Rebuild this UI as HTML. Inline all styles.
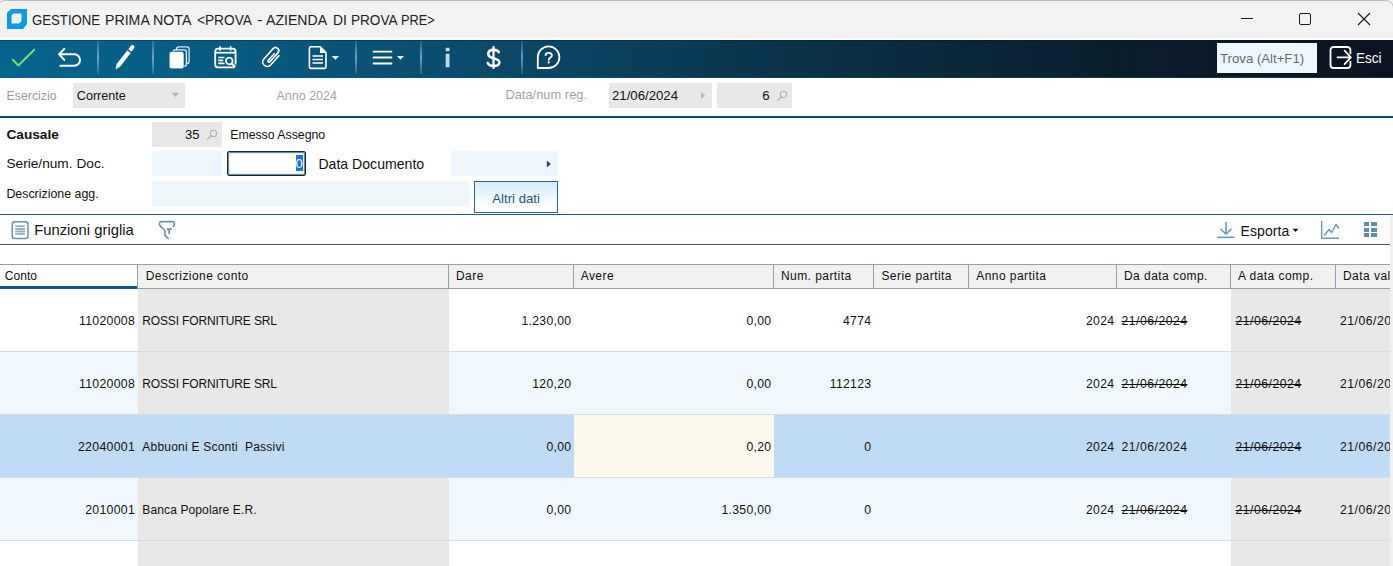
<!DOCTYPE html>
<html><head><meta charset="utf-8"><style>
html,body{margin:0;padding:0;width:1393px;height:566px;overflow:hidden;background:#fff;}
body{position:relative;font-family:"Liberation Sans",sans-serif;}
.t{position:absolute;white-space:nowrap;}
.r{position:absolute;display:block;}
.clip{position:absolute;overflow:hidden;}
</style></head><body>
<div class="r" style="left:0px;top:0px;width:1393px;height:38px;background:#f2f2f2;"></div>
<div class="r" style="left:-3px;top:0;width:1395px;height:60px;border:1px solid #bdbdbd;border-radius:8px;background:#f2f2f2"></div>
<div class="r" style="left:0px;top:38px;width:1393px;height:2px;background:#ffffff;"></div>
<svg class="r" style="left:7px;top:9px" width="21" height="20" viewBox="0 0 21 20">
<path d="M4 0H20V15L16 20H0V4Z" fill="#0a9be0"/>
<path d="M6.5 4.5H14.5V12L12 14.5H4.5V6.5Z" fill="#f2f2f2"/>
</svg>
<div class="t" style="left:32.42px;top:12.20px;font-size:15px;line-height:15px;color:#222;font-weight:normal;transform:scaleX(0.8789);transform-origin:0 0;">GESTIONE</div>
<div class="t" style="left:104.76px;top:12.20px;font-size:15px;line-height:15px;color:#222;font-weight:normal;transform:scaleX(0.9435);transform-origin:0 0;">PRIMA</div>
<div class="t" style="left:153.45px;top:12.20px;font-size:15px;line-height:15px;color:#222;font-weight:normal;transform:scaleX(0.9462);transform-origin:0 0;">NOTA</div>
<div class="t" style="left:197.19px;top:12.20px;font-size:15px;line-height:15px;color:#222;font-weight:normal;transform:scaleX(0.9119);transform-origin:0 0;">&lt;PROVA</div>
<div class="t" style="left:256.77px;top:12.20px;font-size:15px;line-height:15px;color:#222;font-weight:normal;transform:scaleX(1.1250);transform-origin:0 0;">-</div>
<div class="t" style="left:265.96px;top:12.20px;font-size:15px;line-height:15px;color:#222;font-weight:normal;transform:scaleX(0.9400);transform-origin:0 0;">AZIENDA</div>
<div class="t" style="left:333.08px;top:12.20px;font-size:15px;line-height:15px;color:#222;font-weight:normal;transform:scaleX(0.9231);transform-origin:0 0;">DI</div>
<div class="t" style="left:350.50px;top:12.20px;font-size:15px;line-height:15px;color:#222;font-weight:normal;transform:scaleX(0.9040);transform-origin:0 0;">PROVA</div>
<div class="t" style="left:401.05px;top:12.20px;font-size:15px;line-height:15px;color:#222;font-weight:normal;transform:scaleX(0.8526);transform-origin:0 0;">PRE&gt;</div>
<div class="r" style="left:1241px;top:18px;width:12px;height:1px;background:#1b1b1b;"></div>
<div class="r" style="left:1299px;top:13px;width:10px;height:10px;border:1px solid #1b1b1b;border-radius:2px"></div>
<svg class="r" style="left:1357px;top:12px" width="14" height="14" viewBox="0 0 14 14">
<path d="M1 1L13 13M13 1L1 13" stroke="#1b1b1b" stroke-width="1.1"/></svg>
<div class="r" style="left:0px;top:40px;width:1393px;height:38px;background:linear-gradient(90deg,#06648c 0%,#075c84 14%,#095073 29%,#0b4463 40%,#0a3a55 50%,#0a3045 60%,#0a283a 68%,#0a2233 76%,#071e2a 80%,#0a1b2d 84%,#0b1828 90%,#0d1423 95%,#0d1322 100%);"></div>
<div class="r" style="left:96.5px;top:41px;width:2.0px;height:33px;background:linear-gradient(180deg,rgba(140,185,215,0.2),rgba(175,212,235,0.6) 50%,rgba(140,185,215,0.2));"></div>
<div class="r" style="left:151.5px;top:41px;width:2.0px;height:33px;background:linear-gradient(180deg,rgba(140,185,215,0.2),rgba(175,212,235,0.6) 50%,rgba(140,185,215,0.2));"></div>
<div class="r" style="left:354.5px;top:41px;width:2.0px;height:33px;background:linear-gradient(180deg,rgba(140,185,215,0.2),rgba(175,212,235,0.6) 50%,rgba(140,185,215,0.2));"></div>
<div class="r" style="left:419.5px;top:41px;width:2.0px;height:33px;background:linear-gradient(180deg,rgba(140,185,215,0.2),rgba(175,212,235,0.6) 50%,rgba(140,185,215,0.2));"></div>
<div class="r" style="left:520.5px;top:41px;width:2.0px;height:33px;background:linear-gradient(180deg,rgba(140,185,215,0.2),rgba(175,212,235,0.6) 50%,rgba(140,185,215,0.2));"></div>

<svg class="r" style="left:0;top:40px" width="580" height="38" viewBox="0 40 580 38">
 <g fill="none" stroke-linecap="round" stroke-linejoin="round">
  <path d="M12.8 59.8L18.4 65.4L34.2 49.8" stroke="#78dc6a" stroke-width="2.1"/>
  <path d="M64.4 48.8L59 54.3L64.3 59.9M59 54.3H74.3A5.7 5.7 0 0 1 74.3 65.7H60.3" stroke="#fff" stroke-width="2"/>
 </g>
 <path d="M116 68.8L116.9 64.1L127.3 50.7L130.4 53.1L120 66.6Z" fill="#fff" stroke="#fff" stroke-width="0.5" stroke-linejoin="round"/>
 <path d="M129.9 50.5L132.5 47.1" stroke="#fff" stroke-width="4"/>
 <circle cx="132.5" cy="47.1" r="2" fill="#fff"/>
 <!-- copy -->
 <rect x="176.6" y="46.9" width="12.5" height="16.6" rx="2.2" fill="#0a5884" stroke="#cfeafa" stroke-width="1.3"/>
 <rect x="173.2" y="49.9" width="13.2" height="16.2" rx="2.2" fill="#0a5884" stroke="#e4f5ff" stroke-width="1.3"/>
 <rect x="169.2" y="51.6" width="14.8" height="17.2" rx="2.4" fill="#fff" stroke="#0a5884" stroke-width="0.6"/>
 <!-- calendar -->
 <g fill="none" stroke="#fff" stroke-width="1.8">
  <rect x="215.2" y="48.6" width="20.4" height="18.8" rx="3"/>
  <path d="M215.2 52.7H235.6"/>
  <path d="M220 46.9V50M230.6 46.9V50" stroke-linecap="round" stroke-width="1.7"/>
  <path d="M218.2 57.5H224.5M218.2 60.4H223.2M218.2 63.3H224.5" stroke-width="1.7"/>
  <circle cx="229.3" cy="61" r="3.3" stroke-width="1.7"/>
  <path d="M231.7 63.5L235.3 66.8" stroke-width="1.8"/>
 </g>
 <path d="M233.3 66.3L236.5 68.8L236.5 63.3Z" fill="#0a5884"/>
 <path d="M231.7 63.5L235.3 66.8" stroke="#fff" stroke-width="1.8"/>
 <!-- paperclip -->
 <g transform="translate(271.4 57.3) rotate(41.8)">
  <path d="M4.5 -6.2V6.2A4.5 4.5 0 0 1 -4.5 6.2V-7.6A3.2 3.2 0 0 1 1.9 -7.6V4.3A1.1 1.1 0 0 1 -0.3 4.3V-4.6" fill="none" stroke="#fff" stroke-width="1.6" stroke-linecap="round"/>
 </g>
 <!-- doc -->
 <path d="M311 46.8H320.3L326 52.5V66.8A1.6 1.6 0 0 1 324.4 68.4H311A1.6 1.6 0 0 1 309.4 66.8V48.4A1.6 1.6 0 0 1 311 46.8Z" fill="none" stroke="#fff" stroke-width="1.6" stroke-linejoin="round"/>
 <path d="M320 46.8V53H326Z" fill="#fff"/>
 <path d="M312.5 56H323M312.5 59.5H323M312.5 63H323" stroke="#fff" stroke-width="1.6"/>
 <path d="M331.8 56H339L335.4 59.8Z" fill="#fff"/>
 <!-- menu -->
 <path d="M373.5 51.6H391.5M373.5 57.5H391.5M373.5 63.5H391.5" stroke="#fff" stroke-width="1.8" stroke-linecap="round"/>
 <path d="M397 56H404L400.5 59.8Z" fill="#fff"/>
 <!-- info -->
 <rect x="445.7" y="47.8" width="3.8" height="3.4" fill="#c9d6e0"/>
 <rect x="445.7" y="53.8" width="3.8" height="13.5" fill="#c9d6e0"/>
 <!-- help -->
 <path d="M537.8 68V57.3A10.8 10.8 0 1 1 548.6 68Z" fill="none" stroke="#fff" stroke-width="1.8" stroke-linejoin="round"/>
</svg>
<svg class="r" style="left:470px;top:40px" width="100" height="38" viewBox="470 40 100 38">
<path d="M493.5 46.2V68.8" stroke="#fff" stroke-width="2.2"/>
<path d="M498.8 52.2C498 50.6 496.2 49.9 493.6 49.9C490.2 49.9 488.3 51.6 488.3 54C488.3 59.8 499.4 57.2 499.4 62.2C499.4 64.6 497.2 66 493.8 66C490.8 66 488.7 65.1 487.8 63" fill="none" stroke="#fff" stroke-width="2.6" stroke-linecap="round"/>
<path d="M545.6 55.2C545.6 53.6 546.9 52.8 548.7 52.8C550.6 52.8 551.9 53.8 551.9 55.4C551.9 57.5 548.8 57.6 548.8 59.8" fill="none" stroke="#fff" stroke-width="1.8" stroke-linecap="round"/>
<circle cx="548.7" cy="62.4" r="1.05" fill="#fff"/>
</svg>
<div class="r" style="left:1217px;top:43px;width:100px;height:30px;background:#eef7fd;"></div>
<div class="t" style="left:1220.00px;top:51.73px;font-size:13.2px;line-height:13.2px;color:#666a70;font-weight:normal;">Trova (Alt+F1)</div>
<svg class="r" style="left:1328px;top:45px" width="26" height="26" viewBox="0 0 26 26">
<path d="M22.4 9.2V5A3 3 0 0 0 19.4 2H5.5A3 3 0 0 0 2.5 5V20A3 3 0 0 0 5.5 23H19.4A3 3 0 0 0 22.4 20V16" fill="none" stroke="#fff" stroke-width="1.8"/>
<path d="M9.6 12.4H22.4M16.6 5.6L22.8 12.4L16.6 19.2" fill="none" stroke="#fff" stroke-width="1.8" stroke-linecap="round" stroke-linejoin="round"/>
</svg>
<div class="t" style="left:1356.20px;top:49.78px;font-size:15.5px;line-height:15.5px;color:#fff;font-weight:normal;transform:scaleX(0.87);transform-origin:0 0;">Esci</div>
<div class="r" style="left:0px;top:77px;width:1393px;height:1px;background:rgba(10,95,120,0.45);"></div>
<div class="r" style="left:0px;top:40px;width:1393px;height:1px;background:rgba(0,20,35,0.3);"></div>
<div class="t" style="left:6.60px;top:89.59px;font-size:12.3px;line-height:12.3px;color:#9b9b9b;font-weight:normal;">Esercizio</div>
<div class="r" style="left:73px;top:83px;width:112px;height:25px;background:#e8e8e8;"></div>
<div class="t" style="left:76.80px;top:90.03px;font-size:12.6px;line-height:12.6px;color:#111;font-weight:normal;">Corrente</div>
<svg class="r" style="left:171px;top:92px" width="9" height="6" viewBox="0 0 9 6"><path d="M0.5 0.8H8.5L4.5 5Z" fill="#b5b5b5"/></svg>
<div class="t" style="left:276.50px;top:89.62px;font-size:12.5px;line-height:12.5px;color:#a3a3a3;font-weight:normal;">Anno 2024</div>
<div class="t" style="left:505.40px;top:89.28px;font-size:12.9px;line-height:12.9px;color:#a3a3a3;font-weight:normal;">Data/num reg.</div>
<div class="r" style="left:609px;top:83px;width:103px;height:25px;background:#e8e8e8;"></div>
<div class="t" style="left:612.00px;top:89.03px;font-size:13.2px;line-height:13.2px;color:#111;font-weight:normal;">21/06/2024</div>
<svg class="r" style="left:700px;top:91px" width="6" height="9" viewBox="0 0 6 9"><path d="M1 0.5V8.5L5 4.5Z" fill="#b8b8b8"/></svg>
<div class="r" style="left:717px;top:83px;width:75px;height:25px;background:#e8e8e8;"></div>
<div class="t" style="right:623.50px;top:89.03px;font-size:13.2px;line-height:13.2px;color:#111;font-weight:normal;">6</div>
<svg class="r" style="left:776px;top:89px" width="12" height="12" viewBox="0 0 12 12"><circle cx="7.5" cy="5.4" r="3.1" fill="none" stroke="#b0b0b0" stroke-width="1.1"/><path d="M5.3 7.6L1.6 11.4" stroke="#b0b0b0" stroke-width="1.3" stroke-linecap="round"/></svg>
<div class="r" style="left:0px;top:116px;width:1393px;height:2px;background:#0b5073;"></div>
<div class="t" style="left:6.40px;top:128.30px;font-size:13.7px;line-height:13.7px;color:#111;font-weight:bold;">Causale</div>
<div class="r" style="left:152px;top:122px;width:70px;height:25px;background:#e8e8e8;"></div>
<div class="t" style="right:1193.50px;top:127.80px;font-size:13.0px;line-height:13.0px;color:#111;font-weight:normal;">35</div>
<svg class="r" style="left:206px;top:128px" width="12" height="12" viewBox="0 0 12 12"><circle cx="7.5" cy="5.4" r="3.1" fill="none" stroke="#b0b0b0" stroke-width="1.1"/><path d="M5.3 7.6L1.6 11.4" stroke="#b0b0b0" stroke-width="1.3" stroke-linecap="round"/></svg>
<div class="t" style="left:230.20px;top:129.39px;font-size:12.3px;line-height:12.3px;color:#111;font-weight:normal;">Emesso Assegno</div>
<div class="t" style="left:6.40px;top:157.40px;font-size:13.7px;line-height:13.7px;color:#111;font-weight:normal;">Serie/num. Doc.</div>
<div class="r" style="left:152px;top:151px;width:70px;height:25px;background:#eff7fd;"></div>
<div class="r" style="left:227px;top:151px;width:77px;height:23px;border:1px solid #142a38;border-radius:2px;background:#fff;box-shadow:inset 0 0 0 1px rgba(20,45,60,0.55), inset 0 0 0 2px rgba(200,230,250,0.5)"></div>
<div class="r" style="left:296px;top:155px;width:7px;height:16px;background:#1a73d6;"></div>
<div class="t" style="right:1090.20px;top:156.50px;font-size:13.0px;line-height:13.0px;color:#fff;font-weight:normal;">0</div>
<div class="t" style="left:318.40px;top:156.86px;font-size:14.1px;line-height:14.1px;color:#111;font-weight:normal;">Data Documento</div>
<div class="r" style="left:451px;top:151px;width:107px;height:25px;background:#eff7fd;"></div>
<svg class="r" style="left:546px;top:160px" width="6" height="8" viewBox="0 0 6 8"><path d="M0.8 0.5V7.5L5 4Z" fill="#3a4560"/></svg>
<div class="t" style="left:6.40px;top:188.00px;font-size:12.4px;line-height:12.4px;color:#111;font-weight:normal;">Descrizione agg.</div>
<div class="r" style="left:152px;top:181px;width:317px;height:25px;background:#eff7fd;"></div>
<div class="r" style="left:474px;top:181px;width:82px;height:30px;border:1px solid #2b6685;background:linear-gradient(180deg,#d4ecfa 0%,#f4fbff 60%,#ffffff 100%)"></div>
<div class="t" style="left:492.30px;top:191.53px;font-size:13.2px;line-height:13.2px;color:#285677;font-weight:normal;">Altri dati</div>
<div class="r" style="left:0px;top:214px;width:1393px;height:1px;background:#2f5668;"></div>
<svg class="r" style="left:10px;top:220px" width="20" height="20" viewBox="0 0 20 20">
<rect x="2.2" y="1.7" width="15.8" height="16.8" rx="2.5" fill="#fff" stroke="#6a93ac" stroke-width="1.5"/>
<path d="M5 6.2H14.8M5 8.9H14.8M5 11.5H14.8M5 14.1H14.8" stroke="#8d9ba6" stroke-width="1.5"/>
<path d="M5 6.2H6.6M5 8.9H6.6M5 11.5H6.6M5 14.1H6.6" stroke="#c5ccd2" stroke-width="1.5"/>
<path d="M7.5 8.9H14.8M7.5 11.5H14.8" stroke="#79b4d8" stroke-width="1.5"/>
</svg>
<div class="t" style="left:34.20px;top:222.67px;font-size:14.8px;line-height:14.8px;color:#111;font-weight:normal;">Funzioni griglia</div>
<svg class="r" style="left:157px;top:219px" width="20" height="21" viewBox="0 0 20 21">
<path d="M16.3 7.2L17.3 6.1V4A1.6 1.6 0 0 0 15.7 2.6H4.1A1.6 1.6 0 0 0 2.5 4V6.1L7.9 11.8V16.3L11.2 19.4" fill="none" stroke="#6a93ac" stroke-width="1.6" stroke-linecap="round" stroke-linejoin="round"/>
<path d="M9.6 10.1H14.8M12.2 10.1V15" stroke="#6a93ac" stroke-width="1.7"/>
</svg>
<svg class="r" style="left:1216px;top:221px" width="20" height="18" viewBox="0 0 20 18">
<path d="M10 1.5V13M5 8.2L10 13.2L15 8.2" fill="none" stroke="#6a9ab8" stroke-width="1.6" stroke-linecap="round"/>
<path d="M1.3 16.3H18.7" stroke="#6a9ab8" stroke-width="1.6"/>
</svg>
<div class="t" style="left:1240.50px;top:223.75px;font-size:14.0px;line-height:14.0px;color:#111;font-weight:normal;letter-spacing:0.1px;">Esporta</div>
<svg class="r" style="left:1292px;top:228px" width="7" height="5" viewBox="0 0 7 5"><path d="M0.5 0.8H6.5L3.5 4Z" fill="#111"/></svg>
<svg class="r" style="left:1320px;top:220px" width="20" height="20" viewBox="0 0 20 20">
<path d="M1.7 1V18.2H19" fill="none" stroke="#6a9ab8" stroke-width="1.4"/>
<path d="M4.5 15L9 9.5L11.7 12.5L16 4.5L18.5 8" fill="none" stroke="#6a9ab8" stroke-width="1.5" stroke-linejoin="round" stroke-linecap="round"/>
</svg>
<div class="r" style="left:1363.5px;top:222px;width:5.2px;height:4.2px;background:#5f8ea8"></div>
<div class="r" style="left:1370.5px;top:222px;width:6.8px;height:4.2px;background:#5f8ea8"></div>
<div class="r" style="left:1363.5px;top:227.5px;width:5.2px;height:4.2px;background:#5f8ea8"></div>
<div class="r" style="left:1370.5px;top:227.5px;width:6.8px;height:4.2px;background:#5f8ea8"></div>
<div class="r" style="left:1363.5px;top:233px;width:5.2px;height:4.2px;background:#5f8ea8"></div>
<div class="r" style="left:1370.5px;top:233px;width:6.8px;height:4.2px;background:#5f8ea8"></div>
<div class="r" style="left:0px;top:244px;width:1390px;height:1px;background:#555;"></div>
<div class="r" style="left:0px;top:264px;width:1390px;height:25px;background:#f0f0f0;"></div>
<div class="r" style="left:0px;top:264px;width:137px;height:25px;background:#ffffff;"></div>
<div class="r" style="left:0px;top:264px;width:1390px;height:1px;background:#8fa1b3;"></div>
<div class="r" style="left:0px;top:288px;width:1390px;height:1px;background:#8fa1b3;"></div>
<div class="r" style="left:0px;top:286px;width:137px;height:3px;background:#14587e;"></div>
<div class="r" style="left:137px;top:265px;width:1px;height:23px;background:#8fa1b3;"></div>
<div class="r" style="left:448px;top:265px;width:1px;height:23px;background:#8fa1b3;"></div>
<div class="r" style="left:573px;top:265px;width:1px;height:23px;background:#8fa1b3;"></div>
<div class="r" style="left:773px;top:265px;width:1px;height:23px;background:#8fa1b3;"></div>
<div class="r" style="left:873px;top:265px;width:1px;height:23px;background:#8fa1b3;"></div>
<div class="r" style="left:968px;top:265px;width:1px;height:23px;background:#8fa1b3;"></div>
<div class="r" style="left:1116px;top:265px;width:1px;height:23px;background:#8fa1b3;"></div>
<div class="r" style="left:1230px;top:265px;width:1px;height:23px;background:#8fa1b3;"></div>
<div class="r" style="left:1335px;top:265px;width:1px;height:23px;background:#8fa1b3;"></div>
<div class="t" style="left:4.80px;top:270.44px;font-size:12.0px;line-height:12.0px;color:#111;font-weight:normal;letter-spacing:0.05px;">Conto</div>
<div class="t" style="left:145.70px;top:270.44px;font-size:12.0px;line-height:12.0px;color:#111;font-weight:normal;letter-spacing:0.45px;">Descrizione conto</div>
<div class="t" style="left:456.00px;top:270.44px;font-size:12.0px;line-height:12.0px;color:#111;font-weight:normal;letter-spacing:0.45px;">Dare</div>
<div class="t" style="left:580.70px;top:270.44px;font-size:12.0px;line-height:12.0px;color:#111;font-weight:normal;letter-spacing:0.45px;">Avere</div>
<div class="t" style="left:780.90px;top:270.44px;font-size:12.0px;line-height:12.0px;color:#111;font-weight:normal;letter-spacing:0.45px;">Num. partita</div>
<div class="t" style="left:881.40px;top:270.44px;font-size:12.0px;line-height:12.0px;color:#111;font-weight:normal;letter-spacing:0.45px;">Serie partita</div>
<div class="t" style="left:976.20px;top:270.44px;font-size:12.0px;line-height:12.0px;color:#111;font-weight:normal;letter-spacing:0.45px;">Anno partita</div>
<div class="t" style="left:1124.00px;top:270.44px;font-size:12.0px;line-height:12.0px;color:#111;font-weight:normal;letter-spacing:0.45px;">Da data comp.</div>
<div class="t" style="left:1238.00px;top:270.44px;font-size:12.0px;line-height:12.0px;color:#111;font-weight:normal;letter-spacing:0.45px;">A data comp.</div>
<div class="t" style="left:1343.00px;top:270.44px;font-size:12.0px;line-height:12.0px;color:#111;font-weight:normal;letter-spacing:0.45px;">Data val</div>
<div class="r" style="left:0px;top:289px;width:1390px;height:62px;background:#ffffff;"></div>
<div class="r" style="left:138px;top:289px;width:311px;height:62px;background:#e8e8e8;"></div>
<div class="r" style="left:1231px;top:289px;width:159px;height:62px;background:#e8e8e8;"></div>
<div class="r" style="left:0px;top:351px;width:1390px;height:1px;background:#d9dde2;"></div>
<div class="t" style="right:1257.90px;top:314.59px;font-size:12.3px;line-height:12.3px;color:#111;font-weight:normal;letter-spacing:0.3px;">11020008</div>
<div class="t" style="left:142.30px;top:314.84px;font-size:12.0px;line-height:12.0px;color:#111;font-weight:normal;letter-spacing:-0.15px;">ROSSI FORNITURE SRL</div>
<div class="t" style="right:821.70px;top:314.67px;font-size:12.2px;line-height:12.2px;color:#111;font-weight:normal;letter-spacing:0.3px;">1.230,00</div>
<div class="t" style="right:621.70px;top:314.67px;font-size:12.2px;line-height:12.2px;color:#111;font-weight:normal;letter-spacing:0.3px;">0,00</div>
<div class="t" style="right:521.70px;top:314.67px;font-size:12.2px;line-height:12.2px;color:#111;font-weight:normal;letter-spacing:0.3px;">4774</div>
<div class="t" style="right:278.70px;top:314.67px;font-size:12.2px;line-height:12.2px;color:#111;font-weight:normal;letter-spacing:0.3px;">2024</div>
<div class="t" style="left:1121.50px;top:314.67px;font-size:12.2px;line-height:12.2px;color:#111;font-weight:normal;letter-spacing:0.5px;text-decoration:line-through;">21/06/2024</div>
<div class="t" style="left:1235.50px;top:314.67px;font-size:12.2px;line-height:12.2px;color:#111;font-weight:normal;letter-spacing:0.5px;text-decoration:line-through;">21/06/2024</div>
<div class="t" style="left:1340.00px;top:314.67px;font-size:12.2px;line-height:12.2px;color:#111;font-weight:normal;letter-spacing:0.5px;">21/06/2024</div>
<div class="r" style="left:0px;top:352px;width:1390px;height:62px;background:#f0f8fe;"></div>
<div class="r" style="left:138px;top:352px;width:311px;height:62px;background:#e8e8e8;"></div>
<div class="r" style="left:1231px;top:352px;width:159px;height:62px;background:#e8e8e8;"></div>
<div class="r" style="left:0px;top:414px;width:1390px;height:1px;background:#d9dde2;"></div>
<div class="t" style="right:1257.90px;top:377.59px;font-size:12.3px;line-height:12.3px;color:#111;font-weight:normal;letter-spacing:0.3px;">11020008</div>
<div class="t" style="left:142.30px;top:377.84px;font-size:12.0px;line-height:12.0px;color:#111;font-weight:normal;letter-spacing:-0.15px;">ROSSI FORNITURE SRL</div>
<div class="t" style="right:821.70px;top:377.67px;font-size:12.2px;line-height:12.2px;color:#111;font-weight:normal;letter-spacing:0.3px;">120,20</div>
<div class="t" style="right:621.70px;top:377.67px;font-size:12.2px;line-height:12.2px;color:#111;font-weight:normal;letter-spacing:0.3px;">0,00</div>
<div class="t" style="right:521.70px;top:377.67px;font-size:12.2px;line-height:12.2px;color:#111;font-weight:normal;letter-spacing:0.3px;">112123</div>
<div class="t" style="right:278.70px;top:377.67px;font-size:12.2px;line-height:12.2px;color:#111;font-weight:normal;letter-spacing:0.3px;">2024</div>
<div class="t" style="left:1121.50px;top:377.67px;font-size:12.2px;line-height:12.2px;color:#111;font-weight:normal;letter-spacing:0.5px;text-decoration:line-through;">21/06/2024</div>
<div class="t" style="left:1235.50px;top:377.67px;font-size:12.2px;line-height:12.2px;color:#111;font-weight:normal;letter-spacing:0.5px;text-decoration:line-through;">21/06/2024</div>
<div class="t" style="left:1340.00px;top:377.67px;font-size:12.2px;line-height:12.2px;color:#111;font-weight:normal;letter-spacing:0.5px;">21/06/2024</div>
<div class="r" style="left:0px;top:415px;width:1390px;height:62px;background:#bfdbf6;"></div>
<div class="r" style="left:574px;top:415px;width:200px;height:62px;background:#fdf8ee;"></div>
<div class="r" style="left:0px;top:477px;width:1390px;height:1px;background:#d9dde2;"></div>
<div class="t" style="right:1257.90px;top:440.59px;font-size:12.3px;line-height:12.3px;color:#111;font-weight:normal;letter-spacing:0.3px;">22040001</div>
<div class="t" style="left:142.30px;top:440.84px;font-size:12.0px;line-height:12.0px;color:#111;font-weight:normal;letter-spacing:0.22px;">Abbuoni E Sconti&nbsp; Passivi</div>
<div class="t" style="right:821.70px;top:440.67px;font-size:12.2px;line-height:12.2px;color:#111;font-weight:normal;letter-spacing:0.3px;">0,00</div>
<div class="t" style="right:621.70px;top:440.67px;font-size:12.2px;line-height:12.2px;color:#111;font-weight:normal;letter-spacing:0.3px;">0,20</div>
<div class="t" style="right:521.70px;top:440.67px;font-size:12.2px;line-height:12.2px;color:#111;font-weight:normal;letter-spacing:0.3px;">0</div>
<div class="t" style="right:278.70px;top:440.67px;font-size:12.2px;line-height:12.2px;color:#111;font-weight:normal;letter-spacing:0.3px;">2024</div>
<div class="t" style="left:1121.50px;top:440.67px;font-size:12.2px;line-height:12.2px;color:#111;font-weight:normal;letter-spacing:0.5px;">21/06/2024</div>
<div class="t" style="left:1235.50px;top:440.67px;font-size:12.2px;line-height:12.2px;color:#111;font-weight:normal;letter-spacing:0.5px;text-decoration:line-through;">21/06/2024</div>
<div class="t" style="left:1340.00px;top:440.67px;font-size:12.2px;line-height:12.2px;color:#111;font-weight:normal;letter-spacing:0.5px;">21/06/2024</div>
<div class="r" style="left:0px;top:478px;width:1390px;height:62px;background:#f0f8fe;"></div>
<div class="r" style="left:138px;top:478px;width:311px;height:62px;background:#e8e8e8;"></div>
<div class="r" style="left:1231px;top:478px;width:159px;height:62px;background:#e8e8e8;"></div>
<div class="r" style="left:0px;top:540px;width:1390px;height:1px;background:#d9dde2;"></div>
<div class="t" style="right:1257.90px;top:503.59px;font-size:12.3px;line-height:12.3px;color:#111;font-weight:normal;letter-spacing:0.3px;">2010001</div>
<div class="t" style="left:142.30px;top:503.84px;font-size:12.0px;line-height:12.0px;color:#111;font-weight:normal;letter-spacing:0.12px;">Banca Popolare E.R.</div>
<div class="t" style="right:821.70px;top:503.67px;font-size:12.2px;line-height:12.2px;color:#111;font-weight:normal;letter-spacing:0.3px;">0,00</div>
<div class="t" style="right:621.70px;top:503.67px;font-size:12.2px;line-height:12.2px;color:#111;font-weight:normal;letter-spacing:0.3px;">1.350,00</div>
<div class="t" style="right:521.70px;top:503.67px;font-size:12.2px;line-height:12.2px;color:#111;font-weight:normal;letter-spacing:0.3px;">0</div>
<div class="t" style="right:278.70px;top:503.67px;font-size:12.2px;line-height:12.2px;color:#111;font-weight:normal;letter-spacing:0.3px;">2024</div>
<div class="t" style="left:1121.50px;top:503.67px;font-size:12.2px;line-height:12.2px;color:#111;font-weight:normal;letter-spacing:0.5px;text-decoration:line-through;">21/06/2024</div>
<div class="t" style="left:1235.50px;top:503.67px;font-size:12.2px;line-height:12.2px;color:#111;font-weight:normal;letter-spacing:0.5px;text-decoration:line-through;">21/06/2024</div>
<div class="t" style="left:1340.00px;top:503.67px;font-size:12.2px;line-height:12.2px;color:#111;font-weight:normal;letter-spacing:0.5px;">21/06/2024</div>
<div class="r" style="left:1390px;top:215px;width:3px;height:351px;background:#f0f0f0;"></div>
<div class="r" style="left:138px;top:541px;width:311px;height:25px;background:#e8e8e8;"></div>
<div class="r" style="left:1231px;top:541px;width:159px;height:25px;background:#e8e8e8;"></div>
</body></html>
